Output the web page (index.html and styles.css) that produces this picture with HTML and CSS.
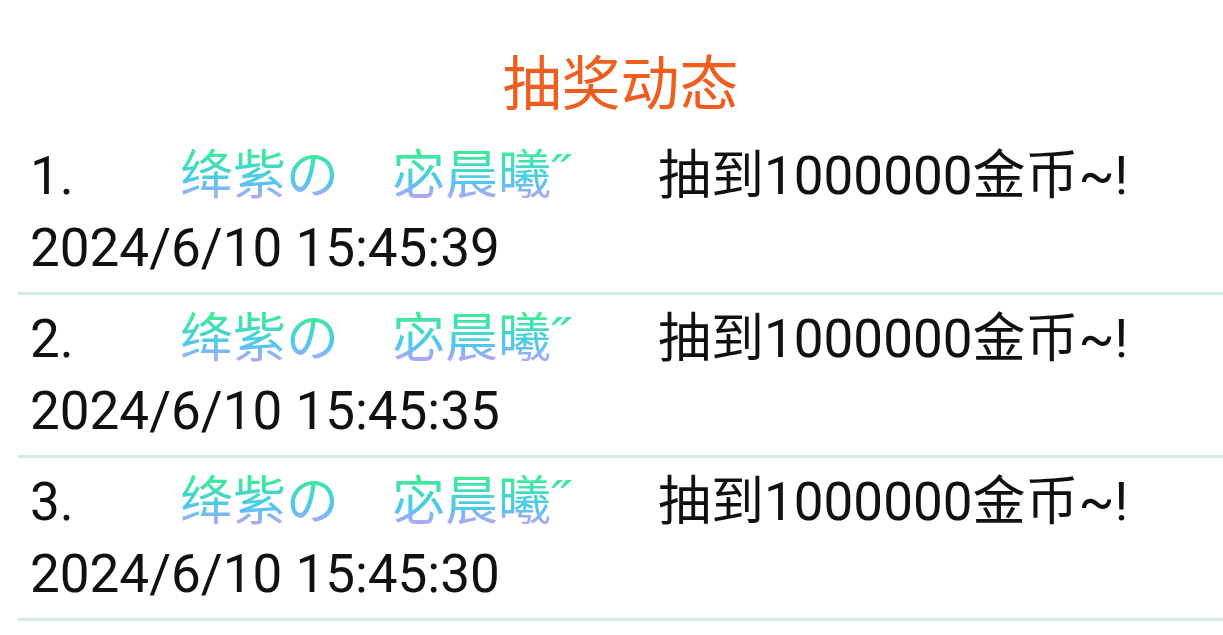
FILE: index.html
```html
<!DOCTYPE html>
<html lang="zh">
<head>
<meta charset="utf-8">
<title>抽奖动态</title>
<link rel="stylesheet" href="styles.css">
</head>
<body>
<div class="page">
  <h1 class="title">抽奖动态</h1>
  <ul class="list">
    <li class="item">
      <div class="line">
        <span class="num">1.</span>
        <span class="name">绛紫の　宓晨曦˝</span>
        <span class="msg">抽到1000000金币~!</span>
      </div>
      <div class="time">2024/6/10 15:45:39</div>
    </li>
    <li class="item">
      <div class="line">
        <span class="num">2.</span>
        <span class="name">绛紫の　宓晨曦˝</span>
        <span class="msg">抽到1000000金币~!</span>
      </div>
      <div class="time">2024/6/10 15:45:35</div>
    </li>
    <li class="item">
      <div class="line">
        <span class="num">3.</span>
        <span class="name">绛紫の　宓晨曦˝</span>
        <span class="msg">抽到1000000金币~!</span>
      </div>
      <div class="time">2024/6/10 15:45:30</div>
    </li>
  </ul>
</div>
</body>
</html>
```

FILE: styles.css
```css
html, body {
  margin: 0;
  padding: 0;
  background: #ffffff;
}

body {
  font-family: Roboto, "Noto Sans CJK SC", sans-serif;
  color: #111111;
}

.page {
  padding: 44px 0 0 18px;
}

.title {
  margin: 0 0 16px 0;
  font-family: "Noto Sans CJK SC", sans-serif;
  font-weight: 400;
  font-size: 59px;
  line-height: 72px;
  color: #ef5e1f;
  text-align: center;
}

.list {
  list-style: none;
  margin: 0;
  padding: 0;
}

.item {
  padding: 8px 0 8px 12px;
  border-bottom: 3px solid #d2ece5;
  font-size: 53px;
  line-height: 72px;
}

.line {
  display: flex;
  align-items: flex-start;
  white-space: nowrap;
}

.num {
  width: 150px;
  flex: none;
}

.name {
  display: inline-block;
  width: 478px;
  flex: none;
  height: 72px;
  line-height: 62px;
  font-family: "Noto Sans CJK SC", sans-serif;
  background: linear-gradient(to bottom, #3dea98 18%, #4fc6f4 58%, #c9a0f2 84%);
  -webkit-background-clip: text;
  background-clip: text;
  color: transparent;
}

.msg {
  flex: none;
}

.time {
  white-space: nowrap;
}
```
